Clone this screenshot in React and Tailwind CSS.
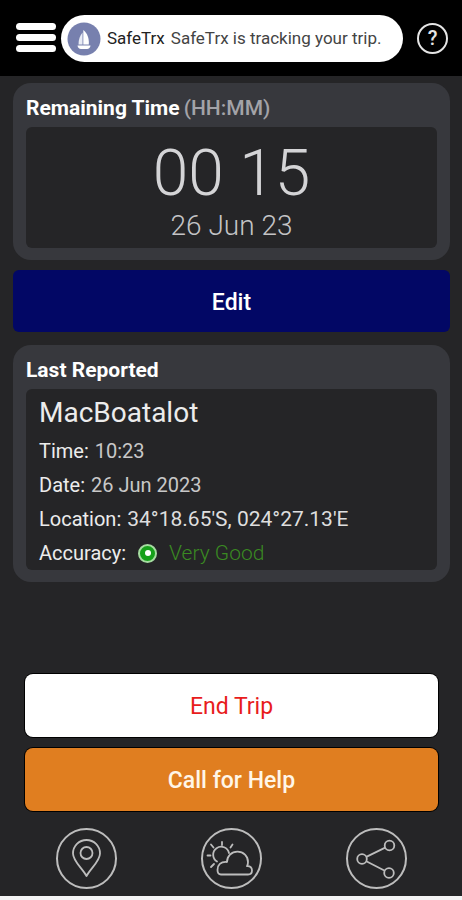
const report = [
    { label: 'Time', value: '10:23', className: 'text-[#c8c8c8]' },
    { label: 'Date', value: '26 Jun 2023', className: 'text-[#c8c8c8]' },
    { label: 'Location', value: `34°18.65'S, 024°27.13'E`, className: 'text-[21px] text-[#dedede]' }
];

const SailBoatIcon = () => (
    <svg viewBox="0 0 34 34" className="size-[34px] shrink-0" aria-hidden="true">
        <circle cx="17" cy="17" r="16.5" fill="#7780ae" />
        <path d="M15.500 10.500v12h-4c0-5 1.500-9 4-12z" fill="#e9ecf5" />
        <path d="M16.300 8c4 3 6 8.500 5.500 14.500h-5.500z" fill="#fff" />
        <path d="M10.500 23.500h13c-.3 2.200-1.500 3.500-3.500 3.500h-6c-2 0-3.200-1.300-3.500-3.500z" fill="#fff" />
    </svg>
);

const PinIcon = () => (
    <svg viewBox="0 0 57 57" className="size-full" fill="none" stroke="currentColor" strokeWidth="1.800" aria-hidden="true">
        <path d="M28.500 46C24 38 15 31 15 23.500a13.500 13.500 0 0 1 27 0C42 31 33 38 28.500 46z" strokeLinejoin="round" />
        <circle cx="28.500" cy="23" r="6" />
    </svg>
);

const WeatherIcon = () => (
    <svg viewBox="0 0 57 57" className="size-full" fill="none" stroke="currentColor" strokeWidth="1.800" strokeLinecap="round" strokeLinejoin="round" aria-hidden="true">
        <path d="M14 31.500a8 8 0 1 1 12-8.500" />
        <path d="M19 12v3M8 14.500l2.500 3M29.500 14.500l-2 3M4.500 25.500h3M8 37l3-3" />
        <path d="M18 44.500c-2 0-3.500-1.500-3.500-4.500 0-5 3-8.500 9.500-8 0-6 4.500-10.300 10.500-10.300S45 26 45 32c0 1.500-.3 3-1 4.200 3.500-.2 5 1.500 5 4.300 0 2.500-1.500 4-4 4z" />
    </svg>
);

const ShareIcon = () => (
    <svg viewBox="0 0 57 57" className="size-full" fill="none" stroke="currentColor" strokeWidth="1.800" aria-hidden="true">
        <circle cx="14" cy="29" r="4.800" />
        <circle cx="41.500" cy="15.500" r="4.800" />
        <circle cx="41" cy="43" r="4.800" />
        <path d="M18.300 26.900l18.900-9.300M18.300 31.200l18.500 9.600" />
    </svg>
);

const Card = ({ title, hint, children }) => (
    <section className="rounded-[18px] bg-[#37383d] px-[13px] pb-3">
        <h2 className="flex h-11 items-center gap-1 pt-[7px] text-[21px] font-bold text-white">
            {title}
            {hint && <span className="font-medium text-[#a3a3a8]">{hint}</span>}
        </h2>
        <div className="rounded-md bg-[#252527]">{children}</div>
    </section>
);

const RoundButton = ({ label, children }) => (
    <button type="button" aria-label={label} className="size-[61px] rounded-full border-2 border-[#bdbdbd] text-[#bdbdbd]">
        {children}
    </button>
);

export default function App() {
    return (
        <div className="flex min-h-screen flex-col border-b-4 border-[#f4f4f4] bg-[#252527] font-['Roboto',sans-serif]">
            {/* Top bar */}
            <header className="flex h-[76px] items-center bg-black px-[14px]">
                <button type="button" aria-label="Menu" className="flex w-11 shrink-0 flex-col gap-1 px-[2px] pb-[2px]">
                    <span className="h-[7px] rounded-full bg-white" />
                    <span className="h-[7px] rounded-full bg-white" />
                    <span className="h-[7px] rounded-full bg-white" />
                </button>
                <div className="ml-[3px] flex h-[47px] flex-1 items-center gap-[6px] rounded-full bg-white pt-px pl-[6px] text-[17px] whitespace-nowrap">
                    <SailBoatIcon />
                    <span className="text-[#222]">SafeTrx</span>
                    <span className="text-[#444]">SafeTrx is tracking your trip.</span>
                </div>
                <button
                    type="button"
                    aria-label="Help"
                    className="ml-[14px] size-[31px] shrink-0 rounded-full border-2 border-[#e5e5e5] text-xl leading-none font-medium text-[#e5e5e5]"
                >
                    ?
                </button>
            </header>

            <main className="flex flex-1 flex-col pt-[7px] pr-3 pl-[13px]">
                <Card title="Remaining Time" hint="(HH:MM)">
                    <div className="flex flex-col items-center pt-[13px] pb-1 font-light">
                        <p className="text-[64px] leading-[68px] text-[#d4d4d6]">00 15</p>
                        <p className="text-[28px] leading-9 text-[#c4c4c6]">26 Jun 23</p>
                    </div>
                </Card>

                <button type="button" className="mt-[10px] h-[62px] rounded-md bg-[#020765] pt-1 text-[23px] font-medium text-white">
                    Edit
                </button>

                <div className="mt-[13px]">
                    <Card title="Last Reported">
                        <div className="px-[13px] pt-[3px] text-[#ececec]">
                            <h3 className="text-[28px] leading-[42px]">MacBoatalot</h3>
                            <dl className="text-xl leading-[34px]">
                                {report.map((row) => (
                                    <div key={row.label} className="flex items-center gap-[6px]">
                                        <dt>{row.label}:</dt>
                                        <dd className={row.className}>{row.value}</dd>
                                    </div>
                                ))}
                                <div className="flex items-center">
                                    <dt>Accuracy:</dt>
                                    <dd className="ml-3 flex items-center gap-3 text-[21px] font-light text-[#3a8a22]">
                                        <span className="flex size-[19px] items-center justify-center rounded-full border-2 border-[#a5dca0] bg-[#16a01a]">
                                            <span className="size-[6px] rounded-full bg-white" />
                                        </span>
                                        Very Good
                                    </dd>
                                </div>
                            </dl>
                        </div>
                    </Card>
                </div>

                {/* Trip actions */}
                <div className="mt-auto flex flex-col gap-[11px] px-3 pt-6 text-[23px]">
                    <button type="button" className="h-[63px] rounded-lg bg-white pt-1 text-[#e81c1c] ring-1 ring-black">
                        End Trip
                    </button>
                    <button type="button" className="h-[63px] rounded-lg bg-[#e07e20] pt-1 font-medium text-[#fff6e8] ring-1 ring-black">
                        Call for Help
                    </button>
                </div>

                <nav className="mt-[17px] mb-[7px] flex justify-between px-[43px]">
                    <RoundButton label="Location">
                        <PinIcon />
                    </RoundButton>
                    <RoundButton label="Weather">
                        <WeatherIcon />
                    </RoundButton>
                    <RoundButton label="Share">
                        <ShareIcon />
                    </RoundButton>
                </nav>
            </main>
        </div>
    );
}
